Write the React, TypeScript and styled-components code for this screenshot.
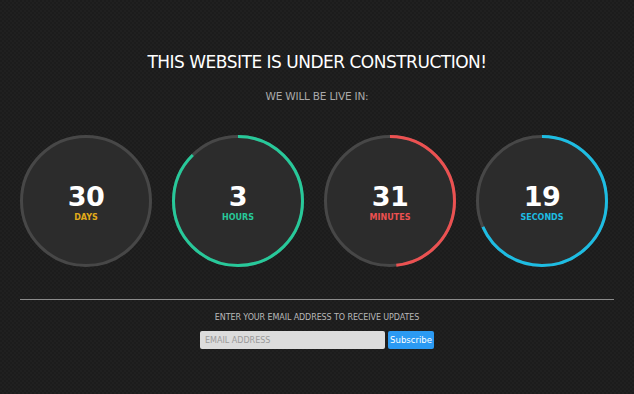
import styled, { createGlobalStyle } from 'styled-components'

const GlobalStyle = createGlobalStyle`
  html, body {
    margin: 0;
    padding: 0;
    background: #1c1c1c;
  }
  body {
    font-family: "DejaVu Sans", sans-serif;
    background-color: #1c1c1c;
    background-image:
      linear-gradient(45deg, rgba(255,255,255,0.018) 25%, transparent 25%, transparent 75%, rgba(255,255,255,0.018) 75%),
      linear-gradient(45deg, rgba(255,255,255,0.018) 25%, transparent 25%, transparent 75%, rgba(255,255,255,0.018) 75%);
    background-size: 4px 4px;
    background-position: 0 0, 2px 2px;
  }
`

const Page = styled.div`
  width: 634px;
  height: 394px;
  box-sizing: border-box;
  padding: 51px 20px 0;
  display: flex;
  flex-direction: column;
  align-items: center;
`

const Title = styled.h1`
  margin: 0;
  font-size: 17px;
  line-height: 22px;
  font-weight: normal;
  color: #ffffff;
  letter-spacing: -0.5px;
`

const Subtitle = styled.h2`
  margin: 17px 0 0;
  font-size: 10.5px;
  font-weight: normal;
  color: #aaaaaa;
  letter-spacing: -0.2px;
`

const Timers = styled.div`
  margin-top: 33px;
  align-self: stretch;
  display: flex;
  gap: 20px;
`

const Dial = styled.div`
  position: relative;
  width: 132px;
  height: 132px;
  display: flex;
  flex-direction: column;
  align-items: center;
  justify-content: center;
`

const Ring = styled.svg`
  position: absolute;
  inset: 0;
`

const Value = styled.div`
  position: relative;
  margin-top: 2px;
  font-size: 27px;
  font-weight: bold;
  line-height: 30px;
  color: #ffffff;
  letter-spacing: -0.5px;
`

const Unit = styled.div<{ $color: string }>`
  position: relative;
  margin-top: 1px;
  font-size: 8px;
  font-weight: bold;
  color: ${p => p.$color};
`

const Divider = styled.hr`
  align-self: stretch;
  margin: 32px 0 0;
  border: none;
  border-top: 1px solid #8a8a8a;
`

const Prompt = styled.p`
  margin: 13px 0 0;
  font-size: 8px;
  color: #b8b8b8;
  letter-spacing: -0.1px;
`

const Form = styled.form`
  margin-top: 9px;
  display: flex;
  gap: 3px;
`

const EmailInput = styled.input`
  width: 185px;
  height: 18px;
  box-sizing: border-box;
  padding: 0 5px;
  border: none;
  border-radius: 2px;
  background: #dcdcdc;
  font-family: inherit;
  font-size: 8px;
  color: #555;
  &::placeholder {
    color: #9a9a9a;
  }
`

const SubscribeButton = styled.button`
  height: 18px;
  width: 46px;
  padding: 0;
  border: none;
  border-radius: 2px;
  background: #2b9af3;
  color: #ffffff;
  font-family: inherit;
  font-size: 8.5px;
`

const timers = [
  { value: 30, unit: 'DAYS', color: '#e2ab1a', progress: 0 },
  { value: 3, unit: 'HOURS', color: '#27c99a', progress: 21 / 24 },
  { value: 31, unit: 'MINUTES', color: '#ec5151', progress: 29 / 60 },
  { value: 19, unit: 'SECONDS', color: '#1dbde3', progress: 41 / 60 },
]

function Countdown({ value, unit, color, progress }: typeof timers[number]) {
  const r = 64.5
  const c = 2 * Math.PI * r
  return (
    <Dial>
      <Ring width="132" height="132" viewBox="0 0 132 132">
        <circle cx="66" cy="66" r={r} fill="#2c2c2c" stroke="#474747" strokeWidth="3" />
        {progress > 0 && (
          <circle
            cx="66"
            cy="66"
            r={r}
            fill="none"
            stroke={color}
            strokeWidth="3"
            strokeDasharray={`${c * progress} ${c}`}
            transform="rotate(-90 66 66)"
          />
        )}
      </Ring>
      <Value>{value}</Value>
      <Unit $color={color}>{unit}</Unit>
    </Dial>
  )
}

export default function App() {
  return (
    <>
      <GlobalStyle />
      <Page>
        <Title>THIS WEBSITE IS UNDER CONSTRUCTION!</Title>
        <Subtitle>WE WILL BE LIVE IN:</Subtitle>
        <Timers>
          {timers.map(t => <Countdown key={t.unit} {...t} />)}
        </Timers>
        <Divider />
        <Prompt>ENTER YOUR EMAIL ADDRESS TO RECEIVE UPDATES</Prompt>
        <Form onSubmit={e => e.preventDefault()}>
          <EmailInput type="email" placeholder="EMAIL ADDRESS" />
          <SubscribeButton type="submit">Subscribe</SubscribeButton>
        </Form>
      </Page>
    </>
  )
}
